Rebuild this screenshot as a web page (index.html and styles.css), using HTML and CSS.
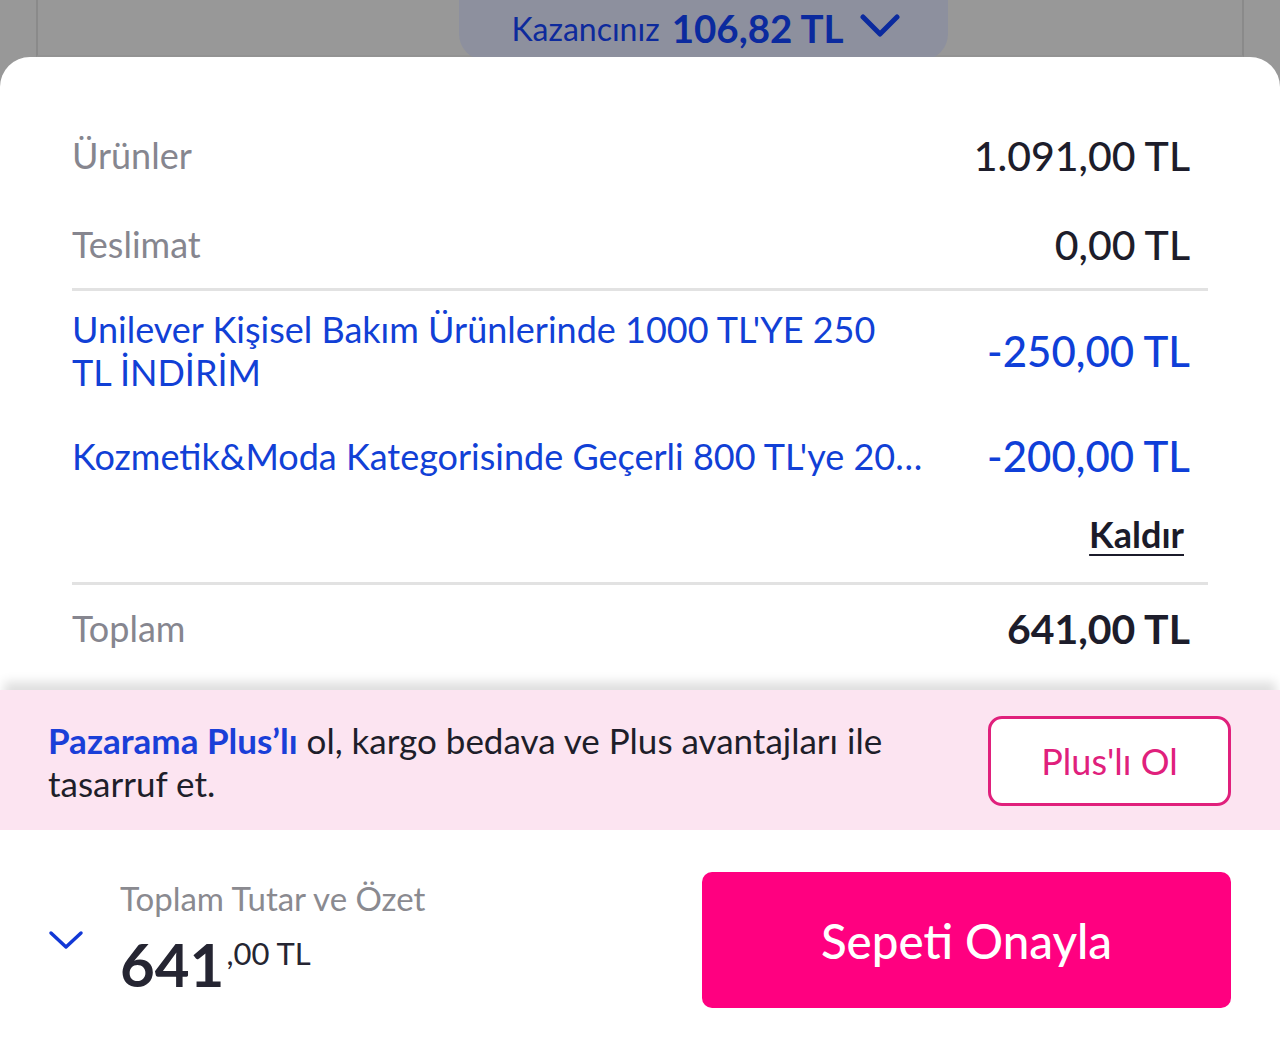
FILE: index.html
```html
<!DOCTYPE html>
<html lang="tr">
<head>
    <meta charset="UTF-8">
    <meta name="viewport" content="width=device-width, initial-scale=1.0">
    <title>Sepetim</title>
    <link rel="stylesheet" href="styles.css">
</head>
<body>

    <!-- Dimmed page behind the sheet -->
    <div class="backdrop">
        <div class="backdrop-card">
            <div class="savings-pill">
                <span class="savings-label">Kazancınız</span>
                <span class="savings-amount">106,82 TL</span>
                <svg class="savings-chevron" width="40" height="26" viewBox="0 0 40 26">
                    <path d="M3 4 L20 21 L37 4" fill="none" stroke="#0b2a9e" stroke-width="5" stroke-linecap="round" stroke-linejoin="round"/>
                </svg>
            </div>
        </div>
    </div>

    <!-- Order summary sheet -->
    <div class="sheet">
        <div class="summary">
            <div class="row first">
                <span class="row-label">Ürünler</span>
                <span class="row-value">1.091,00 TL</span>
            </div>
            <div class="row">
                <span class="row-label">Teslimat</span>
                <span class="row-value">0,00 TL</span>
            </div>

            <div class="divider"></div>

            <div class="discounts">
                <div class="discount">
                    <span class="discount-label">Unilever Kişisel Bakım Ürünlerinde 1000 TL'YE 250 TL İNDİRİM</span>
                    <span class="discount-value">-250,00 TL</span>
                </div>
                <div class="discount">
                    <span class="discount-label single">Kozmetik&amp;Moda Kategorisinde Geçerli 800 TL'ye 200 TL İndirim</span>
                    <span class="discount-value">-200,00 TL</span>
                </div>
                <div class="remove-row">
                    <a href="#" class="remove-link">Kaldır</a>
                </div>
            </div>

            <div class="divider"></div>

            <div class="row total-row">
                <span class="row-label">Toplam</span>
                <span class="row-value">641,00 TL</span>
            </div>
        </div>

        <!-- Plus promo -->
        <div class="promo">
            <p class="promo-text"><strong>Pazarama Plus’lı</strong> ol, kargo bedava ve Plus avantajları ile tasarruf et.</p>
            <button class="promo-btn">Plus'lı Ol</button>
        </div>

        <!-- Checkout bar -->
        <div class="checkout">
            <svg class="checkout-chevron" width="36" height="22" viewBox="0 0 36 22">
                <path d="M3 4 L18 18 L33 4" fill="none" stroke="#1238d6" stroke-width="3.5" stroke-linecap="round" stroke-linejoin="round"/>
            </svg>
            <div class="checkout-total">
                <span class="checkout-caption">Toplam Tutar ve Özet</span>
                <span class="checkout-price">641<sup>,00 TL</sup></span>
            </div>
            <button class="confirm-btn">Sepeti Onayla</button>
        </div>
    </div>

</body>
</html>
```

FILE: styles.css
```css
/* Global Styles */
body, html {
    margin: 0;
    padding: 0;
    font-family: 'Lato', 'Noto Sans', sans-serif;
    background: #989898;
    height: 1048px;
    overflow: hidden;
}

/* Dimmed background */
.backdrop {
    height: 57px;
    padding: 0 36px;
}

.backdrop-card {
    height: 55px;
    border-left: 2px solid #8a8a8a;
    border-right: 2px solid #8a8a8a;
    border-bottom: 2px solid #939393;
}

.savings-pill {
    margin-left: 421px;
    width: 489px;
    height: 60px;
    background: #8d909e;
    border-radius: 0 0 26px 26px;
    display: flex;
    align-items: center;
    justify-content: center;
    gap: 12px;
    padding-bottom: 4px;
    padding-left: 4px;
    box-sizing: border-box;
}

.savings-label {
    font-size: 32px;
    color: #0d2a9c;
}

.savings-amount {
    font-size: 38.5px;
    font-weight: 700;
    color: #0b2a9e;
}

.savings-chevron {
    margin-left: 4px;
    margin-bottom: 4px;
}

/* White sheet */
.sheet {
    position: relative;
    background: white;
    border-radius: 30px 30px 0 0;
    height: 991px;
}

.summary {
    padding: 53px 72px 0 72px;
}

.row {
    display: flex;
    justify-content: space-between;
    align-items: center;
    height: 88px;
    padding-right: 18px;
}

.row.first {
    height: 90px;
}

.row-label {
    font-size: 36px;
    color: #86868f;
}

.row-value {
    font-size: 41px;
    font-weight: 500;
    color: #1d1d2b;
}

.divider {
    height: 3px;
    background: #e2e2e2;
}

/* Discounts */
.discounts {
    padding: 17px 0 26px 0;
    display: flex;
    flex-direction: column;
    gap: 37px;
}

.discount {
    display: flex;
    align-items: center;
    justify-content: space-between;
    padding-right: 18px;
}

.discount-label {
    width: 846px;
    font-size: 36px;
    line-height: 43px;
    color: #1140d6;
}

.discount-label.single {
    width: 854px;
    white-space: nowrap;
    overflow: hidden;
    text-overflow: ellipsis;
}

.discount-value {
    font-size: 42px;
    font-weight: 500;
    color: #0f3fd8;
    white-space: nowrap;
}

.remove-row {
    display: flex;
    justify-content: flex-end;
    padding-right: 24px;
    margin-top: -5px;
}

.remove-link {
    font-size: 36px;
    line-height: 43px;
    font-weight: 700;
    color: #1b1b2a;
    text-decoration: underline;
    text-decoration-thickness: 2px;
    text-underline-offset: 6px;
}

.total-row {
    margin-top: 0;
    height: 86px;
    padding-bottom: 4px;
}

.total-row .row-value {
    font-weight: 700;
}

/* Plus promo band */
.promo {
    margin-top: 15px;
    height: 140px;
    background: #fce4f1;
    box-shadow: 0 -12px 10px -4px rgba(0, 0, 0, 0.13);
    display: flex;
    align-items: center;
    justify-content: space-between;
    padding: 0 49px 0 48px;
    box-sizing: border-box;
}

.promo-text {
    margin: 4px 0 0 0;
    width: 880px;
    font-size: 35px;
    line-height: 43px;
    color: #1e1e2a;
}

.promo-text strong {
    color: #1a3fd8;
    font-weight: 700;
}

.promo-btn {
    width: 243px;
    height: 90px;
    margin-top: 2px;
    background: white;
    border: 3px solid #e0207c;
    border-radius: 14px;
    font-family: inherit;
    font-size: 36px;
    color: #e0207c;
}

/* Checkout bar */
.checkout {
    display: flex;
    align-items: center;
    padding: 42px 49px 0 48px;
}

.checkout-chevron {
    align-self: flex-start;
    margin-top: 57px;
}

.checkout-total {
    display: flex;
    flex-direction: column;
    margin-left: 36px;
    flex: 1;
}

.checkout-caption {
    font-size: 33px;
    color: #8a8a90;
    margin-top: -3px;
}

.checkout-price {
    font-size: 60px;
    font-weight: 700;
    color: #252532;
    line-height: 72px;
    margin-top: -1px;
}

.checkout-price sup {
    font-size: 31px;
    font-weight: 400;
    vertical-align: 22px;
    margin-left: 2px;
}

.confirm-btn {
    width: 529px;
    height: 136px;
    background: #ff0080;
    color: white;
    border: none;
    border-radius: 10px;
    font-family: inherit;
    font-size: 47.5px;
    font-weight: 500;
}
```
